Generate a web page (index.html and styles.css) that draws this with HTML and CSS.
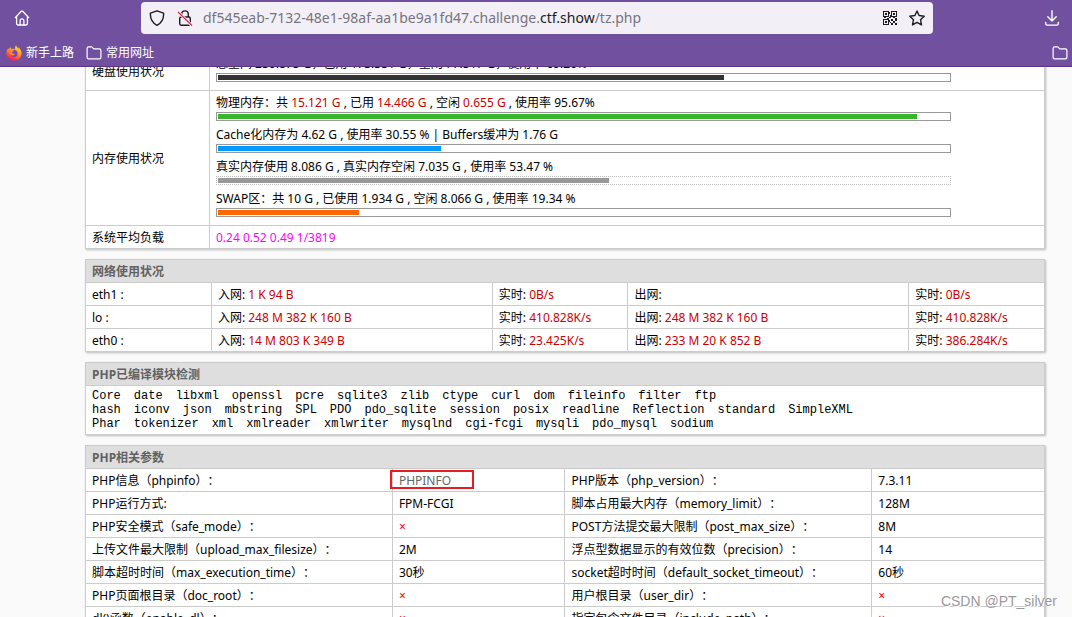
FILE: index.html
```html
<!DOCTYPE html>
<html lang="zh-CN">
<head>
<meta charset="utf-8">
<title>PHP探针</title>
<link rel="stylesheet" href="styles.css">
</head>
<body>
<header class="chrome">
  <div class="toolbar">
    <button class="icon-btn" type="button" aria-label="主页">
      <svg width="16" height="16" viewBox="0 0 16 16" fill="none" stroke="currentColor" stroke-width="1.3" stroke-linejoin="round"><path d="M1 8 7.3 1.3a1 1 0 0 1 1.4 0L15 8M2.6 6.6v7a1.4 1.4 0 0 0 1.4 1.4h8a1.4 1.4 0 0 0 1.4-1.4v-7M6.1 15v-4.2a1.9 1.9 0 0 1 3.8 0V15"/></svg>
    </button>
    <div class="urlbar">
      <button class="field-btn" type="button" aria-label="跟踪保护">
        <svg width="16" height="16" viewBox="0 0 16 16" fill="none" stroke="currentColor" stroke-width="1.4" stroke-linejoin="round"><path d="M8 .8 14.6 3.2C14.9 8.5 12.8 12.8 8 15.3 3.2 12.8 1.1 8.500 1.400 3.200Z"/></svg>
      </button>
      <button class="field-btn" type="button" aria-label="连接不安全">
        <svg width="16" height="16" viewBox="0 0 16 16" fill="none" stroke="currentColor" stroke-width="1.4"><path d="M4.700 7V4.200a3.300 3.300 0 0 1 6.600 0V7"/><rect x="2.700" y="7" width="10.600" height="8.200" rx="1.400"/><path d="M1 2 15 15.500" stroke="#f3eff7" stroke-width="3"/><path d="M1 2 15 15.500" stroke="#e22850" stroke-width="1.300"/></svg>
      </button>
      <div class="address" role="textbox" contenteditable="true" spellcheck="false" aria-label="网址">df545eab-7132-48e1-98af-aa1be9a1fd47.challenge.<span class="domain">ctf.show</span>/tz.php</div>
      <button class="field-btn" type="button" aria-label="二维码">
        <svg width="14" height="14" viewBox="0 0 14 14" fill="currentColor" shape-rendering="crispEdges"><path fill-rule="evenodd" d="M0 0h6v6H0ZM1 1v4h4V1ZM8 0h6v6H8ZM9 1v4h4V1ZM0 8h6v6H0ZM1 9v4h4V9Z"/><path d="M2 2h2v2H2ZM10 2h2v2h-2ZM2 10h2v2H2ZM6 1h1v2H6ZM7 4h1v2H7ZM6 6h2v1H6ZM1 6h2v1H1ZM4 7h2v1H4ZM10 6h2v1h-2ZM12 7h2v1h-2ZM8 8h2v2H8ZM10 10h2v2h-2ZM12 8h2v2h-2ZM6 9h1v2H6ZM8 12h2v2H8ZM12 12h2v2h-2ZM7 11h1v1H7Z"/></svg>
      </button>
      <button class="field-btn" type="button" aria-label="添加书签">
        <svg width="16" height="16" viewBox="0 0 16 16" fill="none" stroke="currentColor" stroke-width="1.400" stroke-linejoin="round"><path d="M8 1 10.100 5.500 15.200 6.200 11.500 9.700 12.500 14.900 8 12.400 3.500 14.900 4.500 9.700.8 6.200 5.900 5.500Z"/></svg>
      </button>
    </div>
    <button class="icon-btn" type="button" aria-label="下载">
      <svg width="16" height="16" viewBox="0 0 16 16" fill="none" stroke="currentColor" stroke-width="1.400" stroke-linecap="round" stroke-linejoin="round"><path d="M8 .8v10M3.800 6.800 8 11l4.200-4.200M1.700 12.500v1a1.600 1.600 0 0 0 1.600 1.600h9.400a1.600 1.600 0 0 0 1.600-1.600v-1"/></svg>
    </button>
  </div>
  <nav class="bookmarks">
    <a class="bookmark" href="#">
      <svg width="16" height="16" viewBox="0 0 16 16"><defs><linearGradient id="flame" x1=".8" y1="0" x2=".3" y2="1"><stop offset="0" stop-color="#ffe226"/><stop offset=".45" stop-color="#ff9a1f"/><stop offset=".8" stop-color="#ff3b47"/><stop offset="1" stop-color="#e31587"/></linearGradient></defs><path d="M10 .3c.4 1.500 1.500 2.100 2.400 3.100.1-.5.100-.8 0-1.200C14.500 3.900 15.700 6.200 15.600 8.500 15.400 12.700 12 15.700 8 15.700S.5 12.500.4 8.400C.4 6.200 1.100 4.600 2.300 3.100v1.500c.8-.7 1.200-1.900 2.200-2.700l.6 2c1.800-.2 2.600.1 3.600.9C8.900 3.100 9.100 1.500 10 .3Z" fill="url(#flame)"/><circle cx="8" cy="8.600" r="3.500" fill="#7542c9"/><path d="M3.200 5.300c1.700-.8 3.500-.5 4.800.7-.6.800-1.700.7-2.200 1.500 1 .4 1.700 1.800 3.400 1.400-.7 1.800-4.200 2.200-5.500-.2Z" fill="#ff8a1e"/></svg>
      新手上路</a>
    <a class="bookmark" href="#">
      <svg width="16" height="16" viewBox="0 0 16 16" fill="none" stroke="currentColor" stroke-width="1.200" stroke-linejoin="round"><path d="M1.100 3.400a1.500 1.500 0 0 1 1.500-1.500h3.200l2 2h5.600a1.500 1.500 0 0 1 1.500 1.500v7a1.500 1.500 0 0 1-1.500 1.500H2.600a1.500 1.500 0 0 1-1.500-1.500Z"/></svg>
      常用网址</a>
    <button class="bookmark overflow" type="button" aria-label="其他书签">
      <svg width="16" height="16" viewBox="0 0 16 16" fill="none" stroke="currentColor" stroke-width="1.200" stroke-linejoin="round"><path d="M1.100 3.400a1.500 1.500 0 0 1 1.500-1.500h3.200l2 2h5.600a1.500 1.500 0 0 1 1.500 1.500v7a1.500 1.500 0 0 1-1.500 1.500H2.600a1.500 1.500 0 0 1-1.500-1.500Z"/></svg>
    </button>
  </nav>
</header>

<main class="viewport">
  <div class="page">
    <table class="panel">
      <colgroup><col class="label-col"><col></colgroup>
      <tbody>
      <tr>
        <td>硬盘使用状况</td>
        <td class="meters">
          <div class="usage">总空间 250.875 G，已用 173.351 G，空闲 77.517 G，使用率 69.20%</div>
          <div class="bar"><div class="fill disk" style="width:69.2%"></div></div>
        </td>
      </tr>
      <tr>
        <td>内存使用状况</td>
        <td class="meters">
          <div class="usage">物理内存：共 <span class="num">15.121 G</span> , 已用 <span class="num">14.466 G</span> , 空闲 <span class="num">0.655 G</span> , 使用率 95.67%</div>
          <div class="bar"><div class="fill physical" style="width:95.67%"></div></div>
          <div class="usage">Cache化内存为 4.62 G , 使用率 30.55 % | Buffers缓冲为 1.76 G</div>
          <div class="bar"><div class="fill cache" style="width:30.55%"></div></div>
          <div class="usage">真实内存使用 8.086 G , 真实内存空闲 7.035 G , 使用率 53.47 %</div>
          <div class="bar dotted"><div class="fill real" style="width:53.47%"></div></div>
          <div class="usage">SWAP区：共 10 G , 已使用 1.934 G , 空闲 8.066 G , 使用率 19.34 %</div>
          <div class="bar"><div class="fill swap" style="width:19.34%"></div></div>
        </td>
      </tr>
      <tr><td>系统平均负载</td><td class="load">0.24 0.52 0.49 1/3819</td></tr>
      </tbody>
    </table>

    <table class="panel">
      <colgroup><col class="w13"><col class="w29"><col class="w14"><col class="w29"><col class="w14"></colgroup>
      <thead><tr><th colspan="5">网络使用状况</th></tr></thead>
      <tbody>
      <tr><td>eth1 :</td><td>入网: <span class="num">1 K 94 B</span></td><td>实时: <span class="num">0B/s</span></td><td>出网:</td><td>实时: <span class="num">0B/s</span></td></tr>
      <tr><td>lo :</td><td>入网: <span class="num">248 M 382 K 160 B</span></td><td>实时: <span class="num">410.828K/s</span></td><td>出网: <span class="num">248 M 382 K 160 B</span></td><td>实时: <span class="num">410.828K/s</span></td></tr>
      <tr><td>eth0 :</td><td>入网: <span class="num">14 M 803 K 349 B</span></td><td>实时: <span class="num">23.425K/s</span></td><td>出网: <span class="num">233 M 20 K 852 B</span></td><td>实时: <span class="num">386.284K/s</span></td></tr>
      </tbody>
    </table>

    <table class="panel">
      <thead><tr><th>PHP已编译模块检测</th></tr></thead>
      <tbody><tr><td class="meters">
        <ul class="modules"><li>Core</li><li>date</li><li>libxml</li><li>openssl</li><li>pcre</li><li>sqlite3</li><li>zlib</li><li>ctype</li><li>curl</li><li>dom</li><li>fileinfo</li><li>filter</li><li>ftp</li></ul>
        <ul class="modules"><li>hash</li><li>iconv</li><li>json</li><li>mbstring</li><li>SPL</li><li>PDO</li><li>pdo_sqlite</li><li>session</li><li>posix</li><li>readline</li><li>Reflection</li><li>standard</li><li>SimpleXML</li></ul>
        <ul class="modules"><li>Phar</li><li>tokenizer</li><li>xml</li><li>xmlreader</li><li>xmlwriter</li><li>mysqlnd</li><li>cgi-fcgi</li><li>mysqli</li><li>pdo_mysql</li><li>sodium</li></ul>
      </td></tr></tbody>
    </table>

    <table class="panel">
      <colgroup><col class="w32"><col class="w18"><col class="w32"><col class="w18"></colgroup>
      <thead><tr><th colspan="4">PHP相关参数</th></tr></thead>
      <tbody>
      <tr><td>PHP信息（phpinfo）：</td><td class="marked"><a class="link" href="#">PHPINFO</a></td><td>PHP版本（php_version）：</td><td>7.3.11</td></tr>
      <tr><td>PHP运行方式:</td><td>FPM-FCGI</td><td>脚本占用最大内存（memory_limit）：</td><td>128M</td></tr>
      <tr><td>PHP安全模式（safe_mode）：</td><td class="off">×</td><td>POST方法提交最大限制（post_max_size）：</td><td>8M</td></tr>
      <tr><td>上传文件最大限制（upload_max_filesize）：</td><td>2M</td><td>浮点型数据显示的有效位数（precision）：</td><td>14</td></tr>
      <tr><td>脚本超时时间（max_execution_time）：</td><td>30秒</td><td>socket超时时间（default_socket_timeout）：</td><td>60秒</td></tr>
      <tr><td>PHP页面根目录（doc_root）：</td><td class="off">×</td><td>用户根目录（user_dir）：</td><td class="off">×</td></tr>
      <tr><td>dl()函数（enable_dl）：</td><td class="off">×</td><td>指定包含文件目录（include_path）：</td><td class="off">×</td></tr>
      </tbody>
    </table>
  </div>
</main>
<div class="watermark">CSDN @PT_silver</div>
</body>
</html>
```

FILE: styles.css
```css
*, *::after { box-sizing: border-box; }
body {
  margin: 0;
  height: 100vh;
  display: flex;
  flex-direction: column;
  overflow: hidden;
  background: #fafafa;
  color: #000;
  font: 12px/16px "Noto Sans", "Noto Sans CJK SC", sans-serif;
  text-spacing-trim: space-all;
}
button { border: 0; padding: 0; background: none; color: inherit; font: inherit; }
svg { display: block; flex: none; }

.chrome { flex: none; background: #7250a0; border-bottom: 1px solid #59367f; color: #fff; }
.toolbar { display: flex; align-items: center; justify-content: space-between; height: 36px; padding: 0 12px 0 14px; }
.urlbar {
  flex: 1;
  display: flex;
  align-items: center;
  gap: 12px;
  height: 32px;
  margin: 0 111px;
  padding: 0 8px;
  border-radius: 4px;
  background: #f3eff7;
  color: #1c1b22;
}
.address { flex: 1; margin-left: -2px; color: #77747c; font-size: 14px; line-height: 20px; white-space: nowrap; overflow: hidden; outline: 0; }
.domain { color: #1c1b22; }
.bookmarks { display: flex; align-items: center; gap: 12px; height: 30px; padding: 3px 4px 0 6px; }
.bookmark { display: flex; align-items: center; gap: 4px; color: #fff; text-decoration: none; }
.overflow { margin-left: auto; }

.viewport { flex: 1; min-height: 0; overflow: hidden; }
.page { margin-top: -16px; padding: 0 27px 0 85px; }
.panel {
  width: 100%;
  margin: 0 0 10px;
  table-layout: fixed;
  border-collapse: collapse;
  background: #fff;
  box-shadow: 1px 1px 2px #bbb;
}
.panel th, .panel td { height: 23px; padding: 4px 6px 2px; border: 1px solid #ccc; text-align: left; vertical-align: middle; white-space: nowrap; }
.panel .meters { padding: 3px 6px; }
.panel th { background: #dedede; color: #626262; font-weight: 700; }
.label-col { width: 124px; }
.w13 { width: 13%; }
.w14 { width: 14%; }
.w18 { width: 18%; }
.w29 { width: 29%; }
.w32 { width: 32%; }

.num { color: #c00; }
.load { color: #f0f; }
.off { color: #f00; }
.link { color: #666; text-decoration: none; }
.usage { height: 18px; line-height: 18px; }
.bar { max-width: 735px; height: 9px; margin-bottom: 5px; padding: 1px; border: 1px solid #999; }
.dotted { border: 1px dotted #bbb; }
.fill { height: 5px; }
.disk { background: #333; }
.physical { background: #3ab52e; }
.cache { background: #0099ff; }
.real { background: #999; }
.swap { background: #ff6600; }

.modules { display: flex; gap: 13px; margin: 0; padding: 0; list-style: none; font: 12px/14px "Liberation Mono", monospace; }

.marked { position: relative; }
.marked::after { content: ""; position: absolute; left: -3px; top: 1px; width: 84px; height: 19px; border: 2px solid #e81c24; }

.watermark {
  position: absolute;
  right: 15px;
  bottom: 6px;
  color: #999;
  font: 14px/20px "Liberation Sans", sans-serif;
  text-shadow: 1px 1px 0 #fff;
}
```
